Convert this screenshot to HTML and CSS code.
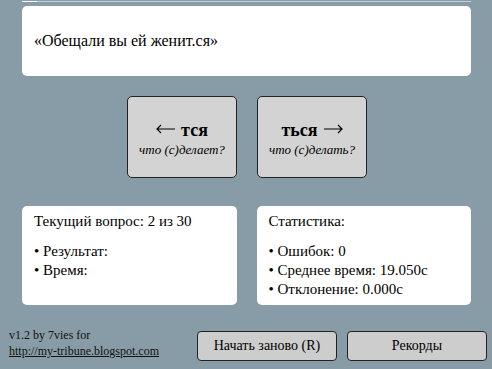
FILE: index.html
```html
<!DOCTYPE html>
<html lang="ru">
<head>
    <meta charset="UTF-8">
    <title>Тся или ться</title>
    <link rel="stylesheet" href="styles.css">
</head>
<body>
    <div class="progress"><div class="progress-fill"></div></div>

    <div class="quote">«Обещали вы ей женит.ся»</div>

    <div class="choices">
        <button class="choice">
            <span class="choice-main">
                <svg class="arrow" width="19" height="10" viewBox="0 0 19 10"><path d="M19 5H1M5 1L1 5L5 9" fill="none" stroke="#000" stroke-width="1.2"/></svg>
                тся
            </span>
            <span class="choice-hint">что (с)делает?</span>
        </button>
        <button class="choice">
            <span class="choice-main">
                ться
                <svg class="arrow" width="19" height="10" viewBox="0 0 19 10"><path d="M0 5H18M14 1L18 5L14 9" fill="none" stroke="#000" stroke-width="1.2"/></svg>
            </span>
            <span class="choice-hint">что (с)делать?</span>
        </button>
    </div>

    <div class="panels">
        <div class="panel">
            <div class="panel-title">Текущий вопрос: 2 из 30</div>
            <div>• Результат:</div>
            <div>• Время:</div>
        </div>
        <div class="panel">
            <div class="panel-title">Статистика:</div>
            <div>• Ошибок: 0</div>
            <div>• Среднее время: 19.050с</div>
            <div>• Отклонение: 0.000с</div>
        </div>
    </div>

    <footer>
        <div class="credits">
            v1.2 by 7vies for<br>
            <a href="#">http://my-tribune.blogspot.com</a>
        </div>
        <button class="btn">Начать заново (R)</button>
        <button class="btn">Рекорды</button>
    </footer>
</body>
</html>
```

FILE: styles.css
```css
* {
    margin: 0;
    padding: 0;
    box-sizing: border-box;
}
body {
    font-family: "Liberation Serif", serif;
    background-color: #879ca6;
    color: #000;
    width: 492px;
    height: 369px;
    overflow: hidden;
}
.progress {
    margin: 1px 21px 0 22px;
    height: 1px;
    background-color: #c5ced2;
}
.progress-fill {
    width: 15px;
    height: 1px;
    background-color: #fff;
}
.quote {
    margin: 4px 21px 0 22px;
    height: 70px;
    padding: 0 12px;
    background-color: #fff;
    border-radius: 5px;
    display: flex;
    align-items: center;
    font-size: 16px;
}
.choices {
    display: flex;
    justify-content: center;
    gap: 20px;
    margin-top: 20px;
    padding-left: 2px;
}
.choice {
    width: 110px;
    height: 82px;
    background-color: #d3d3d3;
    border: 1px solid #222;
    border-radius: 5px;
    font-family: "Liberation Serif", serif;
    display: flex;
    flex-direction: column;
    align-items: center;
    justify-content: center;
    padding-top: 2px;
    cursor: pointer;
}
.choice-main {
    display: flex;
    align-items: center;
    gap: 6px;
    font-size: 18px;
    font-weight: bold;
    line-height: 20px;
}
.arrow {
    margin-top: -2px;
}
.choice-hint {
    font-size: 13px;
    font-style: italic;
    line-height: 15px;
    margin-top: 2px;
}
.panels {
    display: flex;
    gap: 20px;
    margin: 28px 21px 0 22px;
}
.panel {
    flex: 1;
    height: 99px;
    background-color: #fff;
    border-radius: 5px;
    padding: 6px 12px;
    font-size: 15px;
    line-height: 19px;
}
.panel-title {
    margin-bottom: 11px;
}
footer {
    display: flex;
    align-items: flex-start;
    margin-top: 22px;
    padding: 0 5px 0 9px;
}
.credits {
    font-size: 12px;
    line-height: 16px;
    color: #111;
    margin-right: auto;
}
.credits a {
    color: #111;
}
.btn {
    width: 140px;
    height: 30px;
    margin-top: 4px;
    margin-left: 10px;
    background-color: #cdcdcd;
    border: 1px solid #222;
    border-radius: 4px;
    font-family: "Liberation Serif", serif;
    font-size: 14px;
    color: #000;
    cursor: pointer;
}
```
